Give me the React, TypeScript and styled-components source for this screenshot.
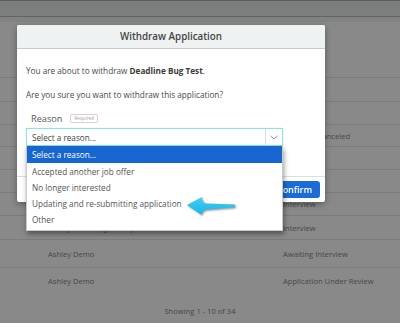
import React from "react";
import styled, { createGlobalStyle } from "styled-components";

const Global = createGlobalStyle`
  html, body { margin: 0; padding: 0; }
  body { font-family: "Open Sans", "Liberation Sans", sans-serif; }
`;

const Page = styled.div`
  position: relative;
  width: 400px;
  height: 323px;
  overflow: hidden;
  background: #898989;
  display: flex;
  flex-direction: column;
`;

const TopBar = styled.div`
  height: 15px;
  background: #7c7e7e;
  border-top: 1px solid #5c5f5f;
  border-bottom: 1px solid #606363;
`;

const SubBar = styled.div`
  height: 5px;
  background: #818383;
`;

const Table = styled.div`
  margin-top: 33px;
  display: flex;
  flex-direction: column;
`;

const Row = styled.div<{ $h: number; $last?: boolean }>`
  height: ${(p) => p.$h}px;
  box-sizing: border-box;
  border-bottom: ${(p) => (p.$last ? "none" : "1px solid #7b7b7b")};
  display: grid;
  grid-template-columns: 283px 1fr;
  align-items: center;
  font-size: 7.6px;
  color: #474747;
  white-space: nowrap;
`;

const NameCell = styled.span`
  padding-left: 48px;
`;

const StatusCell = styled.span``;

const Pager = styled.div`
  margin-top: 11px;
  text-align: center;
  font-size: 7.6px;
  line-height: 12px;
  color: #474747;
`;

const Modal = styled.div`
  position: absolute;
  left: 17px;
  top: 25px;
  width: 308px;
  height: 177px;
  background: #ffffff;
  border-radius: 2px;
  box-shadow: 0 2px 6px rgba(0, 0, 0, 0.35);
  display: flex;
  flex-direction: column;
  z-index: 1;
`;

const Header = styled.div`
  height: 23px;
  background: #eef2f2;
  border-bottom: 1px solid #c6cdce;
  border-radius: 2px 2px 0 0;
  display: flex;
  align-items: center;
  justify-content: center;
  font-size: 9.8px;
  font-weight: 600;
  color: #454545;
`;

const Body = styled.div`
  flex: 1;
  padding: 0 9px;
  display: flex;
  flex-direction: column;
`;

const Para = styled.p<{ $top: number }>`
  margin: ${(p) => p.$top}px 0 0;
  font-size: 8.2px;
  line-height: 12px;
  color: #4a4a4a;
  white-space: nowrap;

  b {
    font-weight: 700;
    color: #3a3a3a;
  }
`;

const LabelRow = styled.div`
  margin-top: 11px;
  height: 12px;
  padding-left: 5px;
  display: flex;
  align-items: center;
  gap: 8px;
`;

const Label = styled.span`
  font-size: 9.2px;
  color: #555;
`;

const Badge = styled.span`
  height: 9px;
  box-sizing: border-box;
  padding: 0 3px;
  border: 1px solid #d3d3d3;
  border-radius: 2px;
  font-size: 4.6px;
  line-height: 7px;
  color: #a5a5a5;
`;

const SelectWrap = styled.div`
  position: relative;
  margin-top: 4px;
  width: 257px;
`;

const SelectBox = styled.div`
  height: 18px;
  box-sizing: border-box;
  border: 1px solid #8ae6dc;
  box-shadow: 0 0 1px #a8f0ea;
  display: flex;
  align-items: stretch;
  background: #fff;
`;

const SelectValue = styled.span`
  flex: 1;
  padding-left: 5px;
  display: flex;
  align-items: center;
  font-size: 8.2px;
  color: #3f3f3f;
`;

const Caret = styled.span`
  width: 16px;
  border-left: 1px solid #dcdcdc;
  display: flex;
  align-items: center;
  justify-content: center;
`;

const Menu = styled.ul`
  position: absolute;
  top: 100%;
  left: 0;
  right: 0;
  margin: 0;
  padding: 0 0 3px;
  list-style: none;
  background: #fff;
  border: 1px solid #c9c9c9;
  border-top: none;
  box-sizing: border-box;
  box-shadow: 1px 3px 5px rgba(0, 0, 0, 0.4);
`;

const Option = styled.li<{ $active?: boolean }>`
  height: ${(p) => (p.$active ? 17 : 16)}px;
  padding-left: 5px;
  display: flex;
  align-items: center;
  font-size: 8.2px;
  color: ${(p) => (p.$active ? "#ffffff" : "#555555")};
  background: ${(p) => (p.$active ? "#1766d0" : "transparent")};
  white-space: nowrap;
`;

const Footer = styled.div`
  height: 25px;
  border-top: 1px solid #dedede;
  padding-right: 5px;
  display: flex;
  align-items: center;
  justify-content: flex-end;
`;

const PrimaryButton = styled.button`
  height: 17px;
  width: 51px;
  padding: 0;
  border: none;
  border-radius: 3px;
  background: #1a6dd6;
  color: #fff;
  font-family: inherit;
  font-size: 9px;
  font-weight: 600;
`;

const Arrow = styled.svg`
  position: absolute;
  left: 183px;
  top: 194px;
  width: 58px;
  height: 24px;
  z-index: 5;
  filter: drop-shadow(1px 1.5px 0.8px rgba(0, 0, 0, 0.45));
`;

const rows: { h: number; name: string; status: string; last?: boolean }[] = [
  { h: 23, name: "", status: "" },
  { h: 24, name: "", status: "" },
  { h: 23, name: "", status: "" },
  { h: 22, name: "", status: "Interview Canceled" },
  { h: 23, name: "", status: "" },
  { h: 23, name: "", status: "" },
  { h: 23, name: "", status: "Interview" },
  { h: 24, name: "Ashley Test Image Complete", status: "Interview" },
  { h: 28, name: "Ashley Demo", status: "Awaiting Interview" },
  { h: 26, name: "Ashley Demo", status: "Application Under Review", last: true },
];

const options = [
  "Select a reason...",
  "Accepted another job offer",
  "No longer interested",
  "Updating and re-submitting application",
  "Other",
];

export default function App() {
  return (
    <>
      <Global />
      <Page>
        <TopBar />
        <SubBar />
        <Table>
          {rows.map((r, i) => (
            <Row key={i} $h={r.h} $last={r.last}>
              <NameCell>{r.name}</NameCell>
              <StatusCell>{r.status}</StatusCell>
            </Row>
          ))}
        </Table>
        <Pager>Showing 1 - 10 of 34</Pager>

        <Modal>
          <Header>Withdraw Application</Header>
          <Body>
            <Para $top={16}>
              You are about to withdraw <b>Deadline Bug Test</b>.
            </Para>
            <Para $top={12}>Are you sure you want to withdraw this application?</Para>
            <LabelRow>
              <Label>Reason</Label>
              <Badge>Required</Badge>
            </LabelRow>
            <SelectWrap>
              <SelectBox>
                <SelectValue>Select a reason...</SelectValue>
                <Caret>
                  <svg width="8" height="5" viewBox="0 0 8 5">
                    <path d="M0.5 0.8 L4 4 L7.5 0.8" fill="none" stroke="#8a8a8a" strokeWidth="0.9" />
                  </svg>
                </Caret>
              </SelectBox>
              <Menu>
                {options.map((o, i) => (
                  <Option key={o} $active={i === 0}>
                    {o}
                  </Option>
                ))}
              </Menu>
            </SelectWrap>
          </Body>
          <Footer>
            <PrimaryButton>Confirm</PrimaryButton>
          </Footer>
        </Modal>

        <Arrow viewBox="0 0 58 24">
          <defs>
            <linearGradient id="arrowFill" x1="0" y1="0" x2="0" y2="1">
              <stop offset="0" stopColor="#3fd0f7" />
              <stop offset="1" stopColor="#17b6e6" />
            </linearGradient>
          </defs>
          <path
            d="M4 11 L19 3 Q18 7.5 22.5 9.6 L52 10.6 L52 13.2 L22.5 15.8 Q18 17.5 19 21 Z"
            fill="url(#arrowFill)"
          />
        </Arrow>
      </Page>
    </>
  );
}
